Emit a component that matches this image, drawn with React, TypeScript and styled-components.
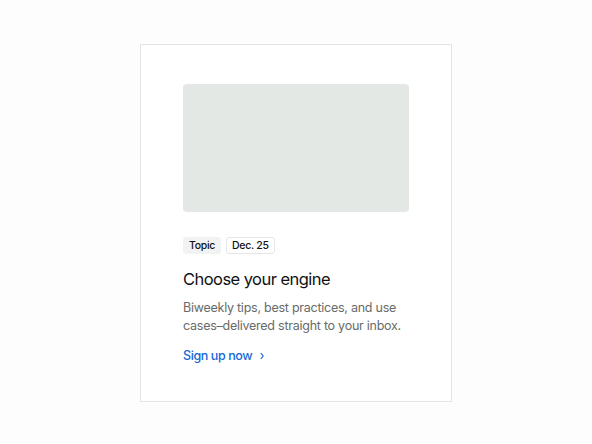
import styled, { createGlobalStyle } from "styled-components"

const GlobalStyle = createGlobalStyle`
    html, body {
        margin: 0;
        padding: 0;
        background: #fdfdfd;
        font-family: Inter, "Liberation Sans", sans-serif;
    }
`

const Page = styled.div`
    width: 592px;
    height: 444px;
    padding-top: 44px;
    padding-left: 140px;
    box-sizing: border-box;
`

const Card = styled.article`
    width: 312px;
    height: 358px;
    box-sizing: border-box;
    border: 1px solid #e2e5e3;
    background: #ffffff;
    padding: 39px 42px;
    display: flex;
    flex-direction: column;
    align-items: flex-start;
`

const Thumb = styled.div`
    flex-shrink: 0;
    align-self: stretch;
    height: 128px;
    border-radius: 4px;
    background: #e3e8e5;
`

const Tags = styled.div`
    display: flex;
    gap: 5px;
    margin-top: 25px;
`

const Tag = styled.span<{ $outlined?: boolean }>`
    display: inline-flex;
    align-items: center;
    height: 17px;
    padding: 0 5px;
    box-sizing: border-box;
    border-radius: 3px;
    font-size: 10.5px;
    font-weight: 500;
    letter-spacing: -0.3px;
    color: #111;
    background: ${({ $outlined }) => ($outlined ? "#fff" : "#f1f3f2")};
    border: 1px solid ${({ $outlined }) => ($outlined ? "#e4e7e5" : "#f1f3f2")};
`

const Title = styled.h2`
    margin: 13px 0 0;
    font-size: 16.5px;
    line-height: 24px;
    font-weight: 400;
    letter-spacing: -0.55px;
    color: #111;
`

const Text = styled.p`
    margin: 8px 0 0;
    font-size: 12.5px;
    line-height: 18px;
    letter-spacing: -0.25px;
    color: #676b69;
`

const Link = styled.a`
    margin-top: 12px;
    display: inline-flex;
    align-items: center;
    gap: 6px;
    font-size: 12.5px;
    line-height: 18px;
    font-weight: 500;
    letter-spacing: -0.4px;
    color: #1468d6;
    text-decoration: none;
    & svg {
        width: 8px;
        height: 8px;
    }
`

function App() {
    return (
        <>
            <GlobalStyle/>
            <Page>
                <Card>
                    <Thumb/>
                    <Tags>
                        <Tag>Topic</Tag>
                        <Tag $outlined>Dec. 25</Tag>
                    </Tags>
                    <Title>Choose your engine</Title>
                    <Text>Biweekly tips, best practices, and use cases–delivered straight to your inbox.</Text>
                    <Link href="#">
                        Sign up now
                        <svg viewBox="0 0 10 10" fill="none" stroke="currentColor" strokeWidth="1.4">
                            <path d="M3.5 1.5 6.5 5 3.5 8.5"/>
                        </svg>
                    </Link>
                </Card>
            </Page>
        </>
    )
}

export default App
